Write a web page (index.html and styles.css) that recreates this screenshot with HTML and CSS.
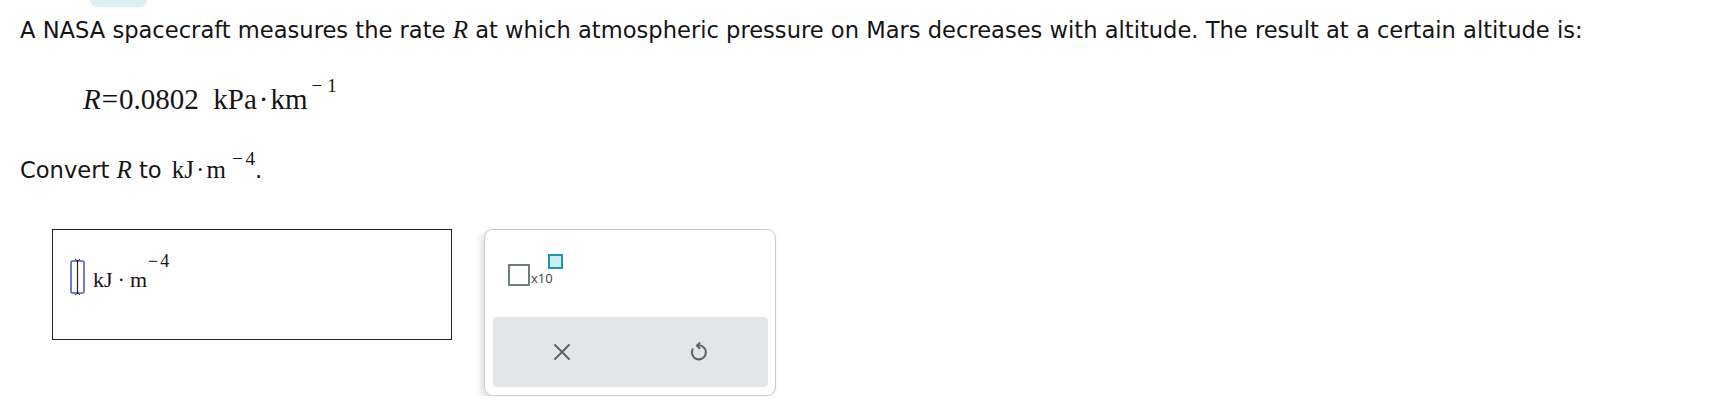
FILE: index.html
```html
<!DOCTYPE html>
<html>
<head>
<meta charset="utf-8">
<link rel="stylesheet" href="styles.css">
</head>
<body>
<div class="tab"></div>
<p class="text line1">A NASA spacecraft measures the rate <i class="mv">R</i> at which atmospheric pressure on Mars decreases with altitude. The result at a certain altitude is:</p>
<div class="eq"><span class="math"><i>R</i><span class="eqs">=</span>0.0802&nbsp;&nbsp;kPa<span class="dot">·</span>km<sup class="sup1"><span class="minus">−</span>1</sup></span></div>
<p class="text line2">Convert <i class="mv">R</i> to <span class="math m2">kJ<span class="dot">·</span>m<sup class="sup2"><span class="minus">−</span>4</sup></span>.</p>
<div class="answer-row">
  <div class="input-box">
    <span class="caret">
      <svg width="20" height="38" viewBox="0 0 20 38">
        <rect x="3" y="3" width="13" height="32" rx="1.5" fill="none" stroke="#4d5cc4" stroke-width="1.6"/>
        <line x1="9.5" y1="2" x2="9.5" y2="36" stroke="#222" stroke-width="1.2"/>
        <path d="M7 1 L9.5 3 L12 1 M7 37 L9.5 35 L12 37" fill="none" stroke="#222" stroke-width="0.9"/>
      </svg>
    </span>
    <span class="math m3">kJ<span class="dot3">·</span>m<sup class="sup3"><span class="minus">−</span>4</sup></span>
  </div>
  <div class="keypad">
    <div class="keys">
      <div class="sci">
        <span class="sq"></span><span class="x10">x10</span><span class="sq-sup"></span>
      </div>
    </div>
    <div class="actions">
      <div class="act">
        <svg width="20" height="20" viewBox="0 0 20 20"><path d="M3 3 L17 17 M17 3 L3 17" stroke="#56676b" stroke-width="2" stroke-linecap="round" fill="none"/></svg>
      </div>
      <div class="act">
        <svg width="22" height="22" viewBox="0 0 22 22"><path d="M9 4.6 A7 7 0 1 1 4.6 8.2" stroke="#56676b" stroke-width="2" fill="none" stroke-linecap="round"/><path d="M11.5 2 L9 4.6 L11.5 7.2" stroke="#56676b" stroke-width="2" fill="none" stroke-linecap="round" stroke-linejoin="round"/></svg>
      </div>
    </div>
  </div>
</div>
</body>
</html>
```
FILE: styles.css
```css
html, body {
  margin: 0;
  padding: 0;
  background: #fff;
}
body {
  padding-left: 20px;
  color: #141414;
  font-family: "DejaVu Sans", Verdana, sans-serif;
}
.tab {
  width: 57px;
  height: 7px;
  margin-left: 70px;
  background: #d9f0f4;
  border-radius: 0 0 22px 22px;
}
.text {
  margin: 0;
  font-size: 22.6px;
  line-height: 30px;
  white-space: nowrap;
}
.line1 {
  margin-top: 8px;
}
.mv {
  font-family: "Liberation Serif", serif;
  font-size: 25px;
}
.math {
  font-family: "Liberation Serif", serif;
}
.eq {
  margin-top: 34px;
  padding-left: 63px;
  font-size: 29px;
  line-height: 40px;
}
.eqs {
  margin: 0 1px;
}
.dot {
  margin: 0 2px;
}
sup {
  line-height: 0;
}
.minus {
  margin-right: 5px;
}
.sup1 {
  font-size: 19px;
  vertical-align: 17px;
  margin-left: 4px;
}
.line2 {
  margin-top: 36px;
}
.m2 {
  font-size: 25px;
  margin-left: 3px;
}
.sup2 {
  font-size: 19px;
  vertical-align: 13px;
  margin-left: 6px;
}
.sup2 .minus {
  margin-right: 3px;
}
.answer-row {
  display: flex;
  align-items: flex-start;
  gap: 32px;
  margin-top: 44px;
  margin-left: 32px;
}
.input-box {
  box-sizing: border-box;
  width: 400px;
  height: 111px;
  border: 1px solid #222;
  display: flex;
  align-items: flex-start;
  padding: 28px 0 0 15px;
}
.caret {
  display: block;
  height: 38px;
}
.m3 {
  font-size: 22px;
  line-height: 26px;
  margin-left: 5px;
  margin-top: 9px;
}
.dot3 {
  margin: 0 5px;
}
.sup3 {
  font-size: 18px;
  vertical-align: 12px;
  position: relative;
  top: -8px;
  margin-left: 1px;
}
.sup3 .minus {
  margin-right: 2px;
}
.keypad {
  box-sizing: border-box;
  width: 292px;
  height: 167px;
  border: 1px solid #c9cdd0;
  border-radius: 9px;
  box-shadow: -3px 3px 7px rgba(0, 0, 0, 0.13);
  padding: 0 7px 8px 8px;
  display: flex;
  flex-direction: column;
}
.keys {
  flex: 1;
  padding: 24px 0 0 15px;
}
.sci {
  position: relative;
  width: 60px;
  height: 34px;
}
.sq {
  position: absolute;
  left: 0;
  top: 10px;
  width: 18px;
  height: 18px;
  border: 2px solid #6f7d81;
}
.x10 {
  position: absolute;
  left: 23px;
  top: 17px;
  font-family: "Open Sans", sans-serif;
  font-size: 13px;
  line-height: 14px;
  color: #3b474a;
}
.sq-sup {
  position: absolute;
  left: 40px;
  top: 0;
  width: 11px;
  height: 11px;
  border: 2px solid #1e98a8;
  background: #c8eef6;
}
.actions {
  height: 70px;
  background: #e3e6e8;
  border-radius: 4px;
  display: flex;
}
.act {
  flex: 1;
  display: flex;
  align-items: center;
  justify-content: center;
}
.act svg {
  display: block;
}
```
